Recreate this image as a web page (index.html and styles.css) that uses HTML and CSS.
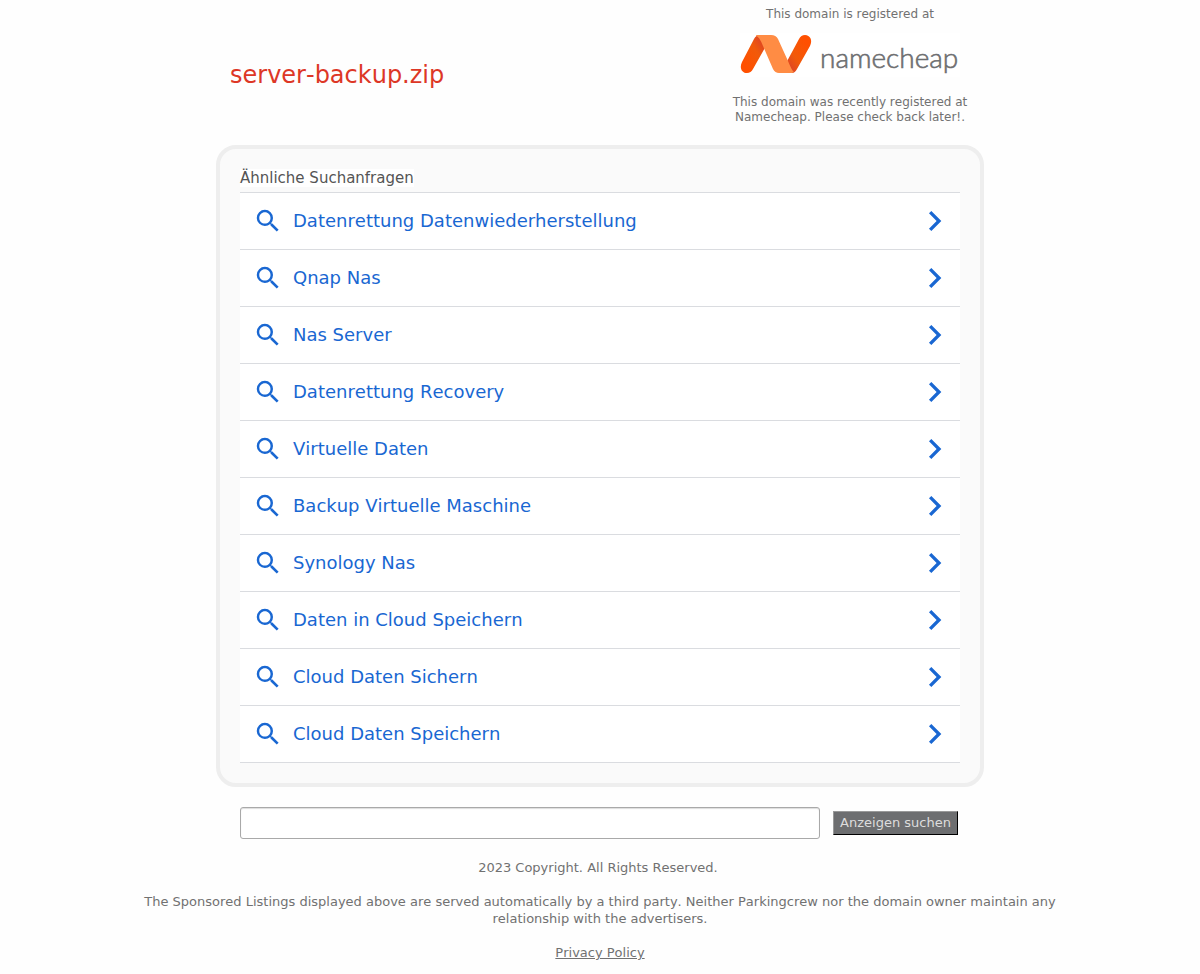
FILE: index.html
```
<!DOCTYPE html>
<html lang="de">
<head>
<meta charset="utf-8">
<meta name="viewport" content="width=device-width, initial-scale=1">
<title>server-backup.zip</title>
<link rel="stylesheet" href="styles.css">
</head>
<body>
<svg class="sprite" aria-hidden="true">
  <symbol id="search" viewBox="0 0 24 24"><path d="M15.5 14h-.79l-.28-.27A6.471 6.471 0 0 0 16 9.5 6.5 6.5 0 1 0 9.5 16c1.61 0 3.09-.59 4.23-1.57l.27.28v.79l5 4.99L20.49 19l-4.99-5zm-6 0C7.01 14 5 11.99 5 9.5S7.01 5 9.5 5 14 7.01 14 9.5 11.99 14 9.5 14z"/></symbol>
  <symbol id="chevron" viewBox="5 4.8 14.4 14.4"><path d="M10 6L8.59 7.41 13.17 12l-4.58 4.59L10 18l6-6z"/></symbol>
</svg>
<header class="header">
  <h1 class="domain">server-backup.zip</h1>
  <div class="registrar">
    <p class="note">This domain is registered at</p>
    <svg class="logo" viewBox="0 0 220 44" role="img" aria-label="namecheap">
      <defs>
        <linearGradient id="left" x1="0" y1="1" x2="1" y2="0"><stop offset="0.2" stop-color="#ff5000"/><stop offset="0.6" stop-color="#f15a0a"/><stop offset="0.9" stop-color="#d9402a"/></linearGradient>
        <linearGradient id="right" x1="1" y1="0" x2="0" y2="1"><stop offset="0.2" stop-color="#ff5000"/><stop offset="0.6" stop-color="#f15a0a"/><stop offset="0.9" stop-color="#d9402a"/></linearGradient>
      </defs>
      <path fill="url(#left)" d="M2 29 14 6Q16 2 20 2L26 13 13 36Q11 40 7 40C2 40-1 35 2 29z"/>
      <path fill="url(#right)" d="M70 13 57 36Q55 40 52 40L45 32 59 6Q61 2 65 2C70 2 73 7 70 13z"/>
      <path fill="#ff8c44" d="M17 2H31Q36 2 38 6L48 28Q52 38 54 39Q53 40 51 40H39Q35 40 33 36L23 13Q19 3 16 3Q16 2 17 2z"/>
      <text class="wordmark" x="80" y="35">namecheap</text>
    </svg>
    <p class="note">This domain was recently registered at Namecheap. Please check back later!.</p>
  </div>
</header>
<main class="main">
  <section class="panel">
    <h2 class="heading"><span>Ähnliche Suchanfragen</span></h2>
    <nav class="list" aria-label="Ähnliche Suchanfragen">
      <a class="row" href="#"><svg class="icon"><use href="#search"/></svg><span class="label">Datenrettung Datenwiederherstellung</span><svg class="arrow"><use href="#chevron"/></svg></a>
      <a class="row" href="#"><svg class="icon"><use href="#search"/></svg><span class="label">Qnap Nas</span><svg class="arrow"><use href="#chevron"/></svg></a>
      <a class="row" href="#"><svg class="icon"><use href="#search"/></svg><span class="label">Nas Server</span><svg class="arrow"><use href="#chevron"/></svg></a>
      <a class="row" href="#"><svg class="icon"><use href="#search"/></svg><span class="label">Datenrettung Recovery</span><svg class="arrow"><use href="#chevron"/></svg></a>
      <a class="row" href="#"><svg class="icon"><use href="#search"/></svg><span class="label">Virtuelle Daten</span><svg class="arrow"><use href="#chevron"/></svg></a>
      <a class="row" href="#"><svg class="icon"><use href="#search"/></svg><span class="label">Backup Virtuelle Maschine</span><svg class="arrow"><use href="#chevron"/></svg></a>
      <a class="row" href="#"><svg class="icon"><use href="#search"/></svg><span class="label">Synology Nas</span><svg class="arrow"><use href="#chevron"/></svg></a>
      <a class="row" href="#"><svg class="icon"><use href="#search"/></svg><span class="label">Daten in Cloud Speichern</span><svg class="arrow"><use href="#chevron"/></svg></a>
      <a class="row" href="#"><svg class="icon"><use href="#search"/></svg><span class="label">Cloud Daten Sichern</span><svg class="arrow"><use href="#chevron"/></svg></a>
      <a class="row" href="#"><svg class="icon"><use href="#search"/></svg><span class="label">Cloud Daten Speichern</span><svg class="arrow"><use href="#chevron"/></svg></a>
    </nav>
  </section>
  <form class="search">
    <input class="field" type="text" name="q" aria-label="Anzeigen suchen">
    <button class="submit" type="submit">Anzeigen suchen</button>
  </form>
</main>
<footer class="footer">
  <p>2023 Copyright. All Rights Reserved.&nbsp;</p>
  <p>The Sponsored Listings displayed above are served automatically by a third party. Neither Parkingcrew nor the domain owner maintain any relationship with the advertisers.</p>
  <p><a href="#">Privacy Policy</a></p>
</footer>
</body>
</html>
```
FILE: styles.css
```
* { box-sizing: border-box; }
body {
  margin: 0;
  background: #fefefe;
  color: #717171;
  font-family: "DejaVu Sans", Verdana, sans-serif;
  font-size: 13px;
  font-kerning: none;
}
h1, h2, p { margin: 0; font-weight: normal; }
.sprite { display: none; }
.header {
  display: flex;
  justify-content: space-between;
  align-items: flex-start;
  max-width: 768px;
  margin: 0 auto;
  padding: 7px 4px 20px 14px;
}
.domain {
  padding-top: 54px;
  color: #dd3726;
  font-size: 24px;
  line-height: 28px;
}
.registrar {
  width: 260px;
  padding: 0 10px;
  text-align: center;
}
.note { font-size: 12px; line-height: 15px; }
.logo {
  display: block;
  width: 220px;
  height: 44px;
  margin: 11px auto 18px;
  background: #fff;
}
.wordmark {
  fill: #6d6e70;
  stroke: #6d6e70;
  stroke-width: 0.6;
  font-family: Lato, sans-serif;
  font-size: 28px;
  font-weight: 300;
}
.main { max-width: 768px; margin: 0 auto; }
.panel {
  padding: 20px;
  border: 4px solid #eee;
  border-radius: 20px;
  background: #fafafa;
}
.heading {
  padding-bottom: 5px;
  color: #555;
  font-size: 15px;
  line-height: 18px;
}
.heading span { background: #fff; }
.list { border-top: 1px solid #dadce0; }
.row {
  display: flex;
  align-items: center;
  gap: 10px;
  height: 57px;
  padding: 0 13px;
  border-bottom: 1px solid #dadce0;
  background: #fff;
  color: #1967d2;
  fill: currentColor;
  font-size: 18px;
  text-decoration: none;
}
.icon { flex: none; width: 30px; height: 30px; }
.label { flex: 1; padding-bottom: 2px; }
.arrow { flex: none; width: 24px; height: 24px; }
.search {
  display: flex;
  align-items: center;
  gap: 13px;
  padding: 20px 26px 20px 24px;
}
.field {
  flex: 1;
  min-width: 0;
  height: 32px;
  padding: 0 8px;
  border: 1px solid #a9a9a9;
  border-radius: 3px;
  background: #fff;
  box-shadow: inset 0 1px 1px #ddd;
  font: inherit;
}
.submit {
  width: 125px;
  height: 24px;
  padding: 0 0 1px;
  border: 1px solid;
  border-color: #999 #000 #000 #999;
  background: #6d6e70;
  color: #ddd;
  font: inherit;
}
.footer {
  display: grid;
  gap: 17px;
  max-width: 960px;
  margin: 0 auto;
  padding-bottom: 12px;
  line-height: 17px;
  text-align: center;
}
.footer a { color: inherit; }
```
